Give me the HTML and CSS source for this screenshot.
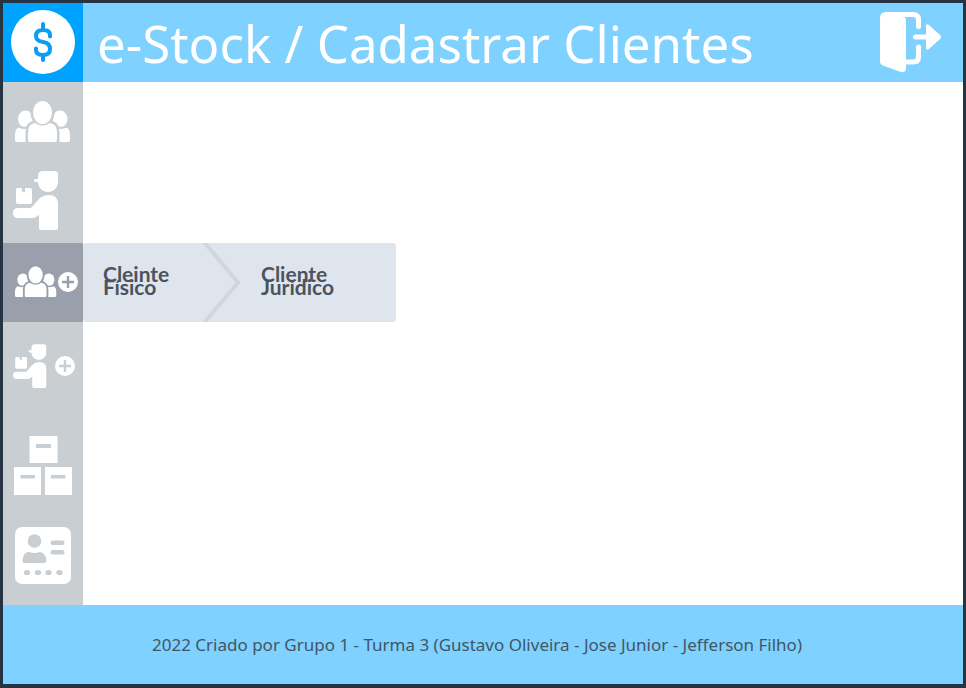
FILE: index.html
```html
<!DOCTYPE html>
<html lang="pt-BR">
<head>
<meta charset="utf-8">
<title>e-Stock / Cadastrar Clientes</title>
<link rel="stylesheet" href="styles.css">
</head>
<body>
<svg class="symbols" aria-hidden="true">
  <symbol id="people" viewBox="0 0 56 42">
    <ellipse cx="10.500" cy="18" rx="7.500" ry="8.500"/>
    <ellipse cx="45" cy="18" rx="7.500" ry="8.500"/>
    <path d="M0 39V34Q0 27 5 26Q10 30 18 25H37Q45 30 50 26Q55 27 55 34V39Q55 41 53 41H2Q0 41 0 39Z"/>
    <g class="cutout"><ellipse cx="27.500" cy="11.500" rx="9.500" ry="11.500"/><path d="M13 43V31Q13 23 20 22Q27.500 28 35 22Q42 23 42 31V43Z"/></g>
    <path class="gap" d="M1 24Q9 30 17 24M38 24Q46 30 54 24"/>
    <ellipse cx="27.500" cy="11.500" rx="9.500" ry="11.500"/>
    <path d="M13 39V31Q13 23 20 22Q27.500 27 35 22Q42 23 42 31V39Q42 41 40 41H15Q13 41 13 39Z"/>
  </symbol>
  <symbol id="courier" viewBox="0 0 46 60">
    <path d="M30 0H42Q45 0 45 3V11C45 17 40 21 35 21S25 17 25 11H22Q21 11 21 9.500T22 8H25V5Q25 0 30 0Z"/>
    <path d="M4 17H9V21.500L10.500 20.500L12 21.500V17H17Q19 17 19 19V31Q19 33 17 33H5Q3 33 3 31V19Q3 17 4 17Z"/>
    <path d="M5 37H18L26 28Q30 24 36 24Q45 24 45 33V57Q45 59 43 59H28Q26 59 26 57V44L23 46Q22 47 20 47H5Q0 47 0 42T5 37Z"/>
  </symbol>
  <symbol id="plus" viewBox="0 0 20 20">
    <path fill-rule="evenodd" d="M10 0A10 10 0 1 1 10 20A10 10 0 1 1 10 0ZM8.800 4V8.800H4V11.200H8.800V16H11.200V11.200H16V8.800H11.200V4Z"/>
  </symbol>
</svg>
<div class="app">
  <header class="topbar">
    <a class="logo" href="#" aria-label="e-Stock">
      <svg viewBox="0 0 80 79"><circle cx="40" cy="39" r="32" fill="#fff"/><path class="dollar" d="M40 21V26M40 52V57M47 33.500V32Q47 27 40 27Q33 27 33 33Q33 38 40 39Q47 40 47 46Q47 52 40 52Q33 52 33 47V45.500"/></svg>
    </a>
    <h1>e-Stock / Cadastrar Clientes</h1>
    <button class="exit" type="button" aria-label="Sair">
      <svg viewBox="0 0 64 64"><path d="M7 2H18L24 6Q27 7 27 11V58Q27 63 22 62L5 56Q1 55 1 51V8Q1 2 7 2Z"/><path class="frame" d="M8 4.500H34Q39.500 4.500 39.500 10V16.500M39.500 37V47Q39.500 52 34 52H27M36.500 27H50"/><path d="M47 16Q47 13 50 15L61 25Q63 27 61 29L50 39Q47 41 47 38Z"/></svg>
    </button>
  </header>
  <div class="content">
    <nav class="sidebar" aria-label="Menu principal">
      <a href="#" aria-label="Clientes"><svg class="people"><use href="#people"/></svg></a>
      <a href="#" aria-label="Fornecedores"><svg class="courier"><use href="#courier"/></svg></a>
      <div class="item">
        <a class="active" href="#" aria-label="Cadastrar clientes"><svg class="people small"><use href="#people"/></svg><svg class="plus"><use href="#plus"/></svg></a>
        <div class="submenu">
          <a href="#">Cleinte<br>Físico</a>
          <svg class="chevron" viewBox="0 0 38 79" aria-hidden="true"><path d="M1 -1L35 39.500L1 80"/></svg>
          <a href="#">Cliente<br>Jurídico</a>
        </div>
      </div>
      <a class="spread" href="#" aria-label="Cadastrar fornecedores"><svg class="courier small"><use href="#courier"/></svg><svg class="plus"><use href="#plus"/></svg></a>
      <a href="#" aria-label="Estoque"><svg class="boxes" viewBox="0 0 58 59"><path fill-rule="evenodd" d="M15.500 0H43.500V27H15.500ZM22 8V12H37V8ZM0 31H27V59H0ZM6.500 39V42.500H21V39ZM31 31H58V59H31ZM37 39V42.500H51.500V39Z"/></svg></a>
      <a href="#" aria-label="Funcionários"><svg class="card" viewBox="0 0 56 57"><rect width="56" height="57" rx="7"/><g class="detail"><circle cx="19.500" cy="14" r="6.800"/><path d="M7.500 34Q8 25 14 25Q19.500 27 25 25Q31 26 31.500 34Q31 36 29 36H9.500Q7.500 36 7.500 34Z"/><rect x="35.500" y="13.500" width="14" height="4.600" rx="2.300"/><rect x="35.500" y="23" width="14" height="4.600" rx="2.300"/><ellipse cx="12" cy="45.500" rx="3.200" ry="2.600"/><ellipse cx="23" cy="45.500" rx="3.200" ry="2.600"/><ellipse cx="33.500" cy="45.500" rx="3.200" ry="2.600"/><ellipse cx="44.500" cy="45.500" rx="3.200" ry="2.600"/></g></svg></a>
    </nav>
    <main></main>
  </div>
  <footer>2022 Criado por Grupo 1 - Turma 3 (Gustavo Oliveira - Jose Junior - Jefferson Filho)</footer>
</div>
</body>
</html>
```
FILE: styles.css
```css
* { box-sizing: border-box; }
body { margin: 0; font-family: "Noto Sans", sans-serif; background: #263343; }
a { text-decoration: none; color: inherit; }
svg { display: block; fill: #fff; }
.symbols { position: absolute; width: 0; height: 0; }
.app { min-height: 100vh; display: flex; flex-direction: column; border: 3px solid #263343; border-bottom-width: 4px; background: #fff; }
.topbar { display: flex; align-items: center; height: 79px; background: #7fd1ff; color: #fff; }
.logo { flex: none; width: 80px; height: 79px; background: #00a2ff; }
.dollar { fill: none; stroke: #0a9df2; stroke-width: 4; stroke-linecap: round; }
h1 { flex: 1; margin: 0; padding: 0 0 0 14px; font-size: 51px; line-height: 60px; font-weight: 400; white-space: nowrap; }
.exit { width: 64px; height: 64px; margin: 0 20px 2px 0; padding: 0; border: 0; background: none; }
.frame { fill: none; stroke: #fff; stroke-width: 5; stroke-linecap: round; }
.content { flex: 1; display: flex; }
.sidebar { width: 80px; display: grid; grid-template-rows: 80px 81px 79px 88px 110px 70px; background: #c9ced3; --cut: #c9ced3; }
.sidebar > a, .active { display: flex; align-items: center; justify-content: center; }
.item { position: relative; }
.active { height: 100%; gap: 1px; padding: 0 0 2px 6px; background: #999fab; --cut: #999fab; }
.sidebar > .spread { gap: 8px; padding-left: 2px; }
.people { width: 56px; height: 42px; }
.people.small { width: 42px; height: 32px; }
.cutout { fill: var(--cut); stroke: var(--cut); stroke-width: 5; }
.gap { fill: none; stroke: var(--cut); stroke-width: 2; }
.courier { width: 46px; height: 60px; margin: 0 14px 4px 0; }
.courier.small { width: 34px; height: 45px; margin: 0; }
.plus { width: 20px; height: 20px; }
.boxes { width: 58px; height: 59px; }
.card { width: 56px; height: 57px; }
.detail { fill: #c9ced3; }
.submenu { position: absolute; left: 100%; top: 0; display: flex; align-items: center; width: 313px; height: 79px; padding-left: 20px; border-radius: 3px; background: #dfe5ec; color: #4b535f; font: 700 21px/13px Lato, sans-serif; }
.submenu a { width: 100px; padding-bottom: 6px; }
.chevron { width: 38px; height: 79px; margin-right: 20px; }
.chevron path { fill: none; stroke: #d0d6dd; stroke-width: 4; }
main { flex: 1; }
footer { height: 79px; padding: 0 12px 0 0; display: flex; align-items: center; justify-content: center; background: #7fd1ff; color: #415665; font-size: 17px; }
```
